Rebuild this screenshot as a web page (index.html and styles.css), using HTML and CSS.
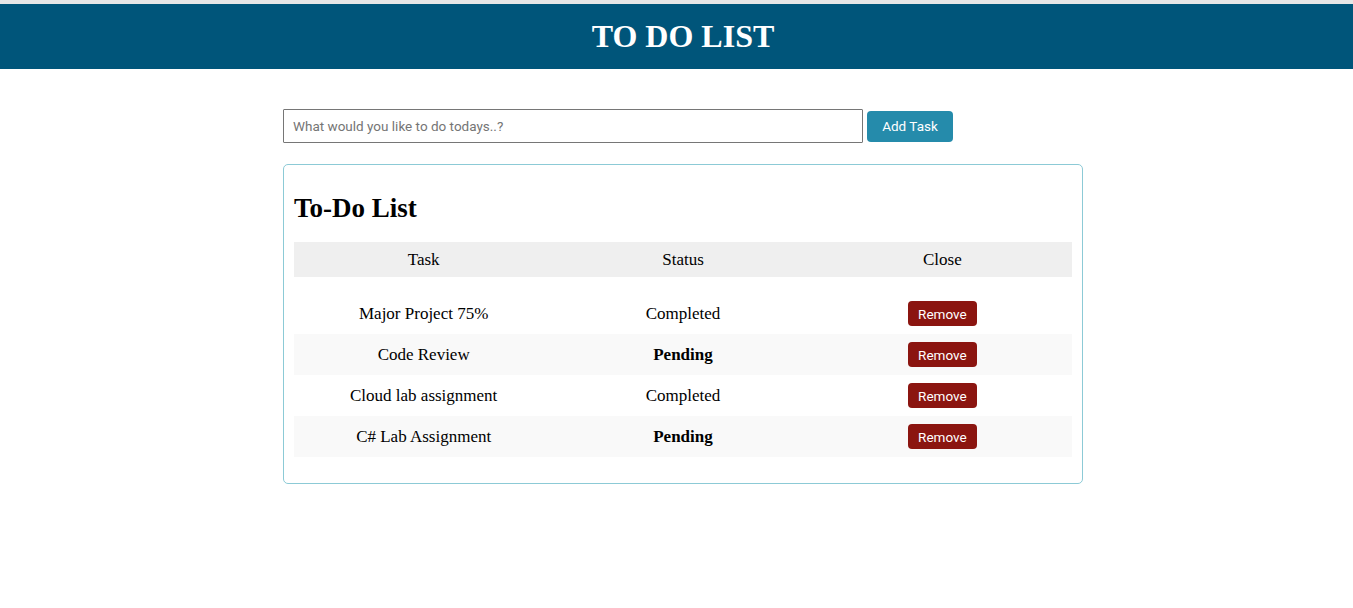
FILE: index.html
```html
<!DOCTYPE html>
<html lang="en">
<head>
<meta charset="utf-8">
<title>To Do List</title>
<link rel="stylesheet" href="styles.css">
</head>
<body>
<div class="page">
  <header class="topbar">
    <h1 class="title">TO DO LIST</h1>
  </header>
  <main class="main">
    <form class="add-form">
      <input class="task-input" type="text" placeholder="What would you like to do todays..?">
      <button class="add-btn" type="button">Add Task</button>
    </form>
    <section class="card">
      <h2 class="card-title">To-Do List</h2>
      <div class="table">
        <div class="row head">
          <div class="cell">Task</div>
          <div class="cell">Status</div>
          <div class="cell">Close</div>
        </div>
        <div class="body">
          <div class="row">
            <div class="cell">Major Project 75%</div>
            <div class="cell">Completed</div>
            <div class="cell"><button class="remove-btn" type="button">Remove</button></div>
          </div>
          <div class="row alt">
            <div class="cell">Code Review</div>
            <div class="cell pending">Pending</div>
            <div class="cell"><button class="remove-btn" type="button">Remove</button></div>
          </div>
          <div class="row">
            <div class="cell">Cloud lab assignment</div>
            <div class="cell">Completed</div>
            <div class="cell"><button class="remove-btn" type="button">Remove</button></div>
          </div>
          <div class="row alt">
            <div class="cell">C# Lab Assignment</div>
            <div class="cell pending">Pending</div>
            <div class="cell"><button class="remove-btn" type="button">Remove</button></div>
          </div>
        </div>
      </div>
    </section>
  </main>
</div>
</body>
</html>
```

FILE: styles.css
```css
html {
  overflow: hidden;
}
body {
  margin: 0;
  background: #ffffff;
  font-family: "Liberation Serif", "Times New Roman", serif;
  color: #000000;
}
.page {
  width: 1366px;
  border-top: 4px solid #e6e6e6;
}
.topbar {
  background: #00557a;
  height: 65px;
  display: flex;
  align-items: center;
  justify-content: center;
}
.title {
  margin: 0;
  padding-bottom: 2px;
  color: #ffffff;
  font-size: 32px;
  font-weight: bold;
  line-height: 1;
}
.main {
  width: 800px;
  margin: 0 auto;
  padding-top: 40px;
}
.add-form {
  display: flex;
  align-items: center;
  gap: 4px;
  margin: 0 0 21px 0;
}
.task-input {
  width: 580px;
  height: 34px;
  box-sizing: border-box;
  border: 1px solid #767676;
  border-radius: 1px;
  padding: 0 9px;
  font-family: Roboto, "Liberation Sans", sans-serif;
  font-size: 13.5px;
  color: #333;
  outline: none;
}
.task-input::placeholder {
  color: #757575;
}
.add-btn {
  width: 86px;
  height: 31px;
  border: none;
  border-radius: 4px;
  background: #258bab;
  color: #ffffff;
  font-family: Roboto, "Liberation Sans", sans-serif;
  font-size: 13.5px;
  padding: 0;
}
.card {
  border: 1px solid #8ccad6;
  border-radius: 5px;
  padding: 29px 10px 26px 10px;
}
.card-title {
  margin: 0 0 20px 0;
  font-size: 27px;
  font-weight: bold;
  line-height: 28px;
}
.table {
  display: flex;
  flex-direction: column;
}
.row {
  display: grid;
  grid-template-columns: 1fr 1fr 1fr;
  height: 41px;
  align-items: center;
  font-size: 17px;
}
.row.head {
  background: #efefef;
  height: 35px;
}
.body {
  padding-top: 16px;
}
.row.alt {
  background: #f9f9f9;
}
.cell {
  text-align: center;
}
.pending {
  font-weight: bold;
}
.remove-btn {
  width: 69px;
  height: 25px;
  border: none;
  border-radius: 4px;
  background: #8b1510;
  color: #ffffff;
  font-family: Roboto, "Liberation Sans", sans-serif;
  font-size: 13.5px;
  padding: 0;
  vertical-align: middle;
}
```
